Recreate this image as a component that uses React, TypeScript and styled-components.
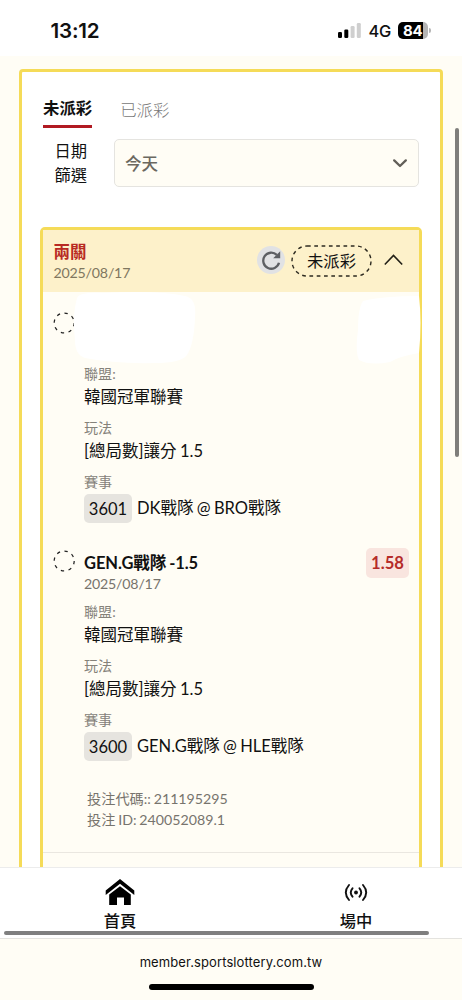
import React from "react";
import styled, { createGlobalStyle } from "styled-components";

const GlobalStyle = createGlobalStyle`
  *, *::before, *::after { box-sizing: border-box; }
  body {
    margin: 0;
    background: #fffdf5;
    color: #111;
    font-family: Lato, "Noto Sans CJK TC", sans-serif;
  }
`;

const Screen = styled.div`
  position: relative;
  display: flex;
  flex-direction: column;
  width: 462px;
  height: 1000px;
  overflow: hidden;
  background: #fffdf5;
`;

const StatusBar = styled.header`
  flex: none;
  display: flex;
  align-items: center;
  justify-content: space-between;
  height: 56px;
  padding: 5px 31px 0 50.5px;
  background: #fff;
  font-family: Inter, sans-serif;
`;

const Clock = styled.span`
  font-size: 20.6px;
  font-weight: 600;
  letter-spacing: -0.2px;
`;

const StatusIcons = styled.div`
  display: flex;
  align-items: center;
`;

const Network = styled.span`
  margin: 0 7px 0 7px;
  font-size: 16.4px;
  font-weight: 500;
  letter-spacing: -0.2px;
`;

const Battery = styled.div`
  display: flex;
  align-items: center;
`;

const BatteryBody = styled.div`
  width: 30px;
  height: 17px;
  padding-left: 5px;
  border-radius: 5px;
  background: linear-gradient(to right, #000 25px, #b5b5b5 25px);
  color: #fff;
  font-size: 15px;
  font-weight: 700;
  line-height: 17px;
  letter-spacing: -0.3px;
`;

const BatteryCap = styled.div`
  width: 2px;
  height: 5px;
  margin-left: 1px;
  border-radius: 0 2px 2px 0;
  background: #b5b5b5;
`;

const Content = styled.main`
  flex: none;
  height: 811px;
  padding: 13px 19px 0;
  overflow: hidden;
`;

const Panel = styled.section`
  height: 830px;
  padding: 20px 20px 0 18px;
  border: 3px solid #f5db58;
  border-radius: 4px;
  background: #fff;
`;

const Tabs = styled.nav`
  display: flex;
  gap: 28px;
  padding-left: 3px;
`;

const Tab = styled.a<{ $active?: boolean }>`
  height: 36px;
  padding-top: ${(p) => (p.$active ? 4 : 6)}px;
  border-bottom: 3px solid ${(p) => (p.$active ? "#b11a22" : "transparent")};
  color: ${(p) => (p.$active ? "#111" : "#777")};
  font-size: 16.4px;
  font-weight: ${(p) => (p.$active ? 700 : 300)};
  line-height: 24px;
`;

const FilterRow = styled.div`
  display: flex;
  justify-content: flex-end;
  align-items: center;
  gap: 27px;
  margin: 11px 1px 0 0;
`;

const FilterLabel = styled.label`
  width: 33px;
  font-size: 16.3px;
  line-height: 24px;
  text-align: right;
`;

const Select = styled.div`
  display: flex;
  align-items: center;
  justify-content: space-between;
  width: 305px;
  height: 48px;
  padding: 0 11px 0 10px;
  border: 1.5px solid #e5e4e0;
  border-radius: 5px;
  background: #fffdf5;
  color: #6b6860;
  font-size: 16.5px;
  font-weight: 500;
`;

const Slip = styled.article`
  position: relative;
  height: 720px;
  margin: 40px -2px 0 0;
  border: 3px solid #f5db58;
  border-radius: 5px;
  background: #fffdf5;
`;

const SlipHeader = styled.div`
  display: flex;
  align-items: center;
  height: 62px;
  padding: 1px 16px 0 10.5px;
  background: #fdf1ca;
`;

const SlipTitle = styled.div`
  flex: 1;
`;

const SlipName = styled.div`
  position: relative;
  top: 1px;
  color: #b82a22;
  font-size: 16.5px;
  font-weight: 700;
  line-height: 21px;
`;

const DateText = styled.div<{ $tone?: string }>`
  color: ${(p) => p.$tone || "#77746d"};
  font-size: 14.2px;
  line-height: 21px;
  letter-spacing: -0.2px;
`;

const Refresh = styled.div`
  display: grid;
  place-items: center;
  width: 28px;
  height: 28px;
  margin: -4px 6px 0 0;
  border-radius: 50%;
  background: #e1e2e4;
`;

const Status = styled.div`
  position: relative;
  width: 81px;
  height: 32px;
  margin: -2px 12px 0 0;
  font-size: 16.3px;
  line-height: 31px;
  text-align: center;
`;

const PillOutline = styled.svg`
  position: absolute;
  inset: 0;
`;

const Chevron = styled.svg`
  margin-top: -4px;
`;

const Leg = styled.section`
  display: grid;
  grid-template-columns: 31.5px 1fr auto;
  height: 238px;
  padding: 0 10px 0 9.5px;
`;

const Marker = styled.svg`
  margin-top: -2px;
`;

const Legs = styled.div`
  padding-top: 21.5px;
`;

const LegTitle = styled.div`
  height: 21px;
  font-size: 16.5px;
  font-weight: 700;
  line-height: 22px;
  letter-spacing: -0.1px;
  word-spacing: -0.8px;
  white-space: nowrap;
`;

const LegDate = styled.div`
  height: 28.5px;
`;

const Field = styled.div`
  height: 54.2px;
`;

const FieldLabel = styled.div`
  color: #85827a;
  font-size: 14.1px;
  line-height: 22px;
`;

const FieldValue = styled.div`
  display: flex;
  align-items: center;
  gap: 5px;
  font-size: 16.5px;
  line-height: 24px;
  word-spacing: -0.9px;
  white-space: nowrap;
`;

const GameNumber = styled.span`
  width: 48px;
  height: 29px;
  margin-top: 1px;
  border-radius: 5px;
  background: #e6e4df;
  line-height: 30px;
  text-align: center;
`;

const Odds = styled.div`
  width: 43px;
  height: 30px;
  margin-top: -4px;
  border-radius: 5px;
  background: #f9e5df;
  color: #b52b29;
  font-size: 16.6px;
  font-weight: 700;
  line-height: 31px;
  text-align: center;
`;

const Codes = styled.div`
  height: 65px;
  margin-top: -2px;
  padding-left: 44px;
  border-bottom: 1.5px solid #eae7e0;
  color: #77746d;
  font-size: 14.2px;
  line-height: 21px;
  word-spacing: -0.8px;
`;

const Masks = styled.svg`
  position: absolute;
  left: 30px;
  top: 60px;
  overflow: visible;
`;

const BottomNav = styled.nav`
  position: relative;
  flex: none;
  display: flex;
  height: 71px;
  padding-left: 2px;
  border-top: 1.5px solid #ececec;
  background: #fff;
`;

const NavItem = styled.a`
  flex: none;
  display: flex;
  flex-direction: column;
  align-items: center;
  width: 236px;
  padding-top: 9px;
  font-size: 16.3px;
  font-weight: 500;
  line-height: 25px;
  svg { height: 31px; }
`;

const HorizontalThumb = styled.div`
  position: absolute;
  left: 4px;
  bottom: 3px;
  width: 425px;
  height: 4px;
  border-radius: 2px;
  background: #7f7f7f;
`;

const VerticalThumb = styled.div`
  position: absolute;
  left: 455px;
  top: 128px;
  width: 4px;
  height: 329px;
  border-radius: 2px;
  background: #7f7e7b;
`;

const AddressBar = styled.footer`
  flex: 1;
  display: flex;
  flex-direction: column;
  align-items: center;
  padding-top: 12px;
  border-top: 1px solid #e4e3df;
  font-family: Inter, sans-serif;
  font-size: 13px;
  line-height: 22px;
  letter-spacing: 0.1px;
`;

const HomeIndicator = styled.div`
  width: 165px;
  height: 6px;
  margin-top: 11px;
  border-radius: 3px;
  background: #000;
`;

const DashedCircle = () => (
  <Marker width="23" height="23" viewBox="0 0 23 23" fill="none">
    <circle cx="11.2" cy="11" r="10" stroke="#222" strokeWidth="1.25" strokeDasharray="3.3 4.55" />
  </Marker>
);

type LegData = { title?: string; date?: string; odds?: string; no: string; game: string };

const legs: LegData[] = [
  { no: "3601", game: "DK戰隊 @ BRO戰隊" },
  { title: "GEN.G戰隊 -1.5", date: "2025/08/17", odds: "1.58", no: "3600", game: "GEN.G戰隊 @ HLE戰隊" },
];

const BetLeg = ({ leg }: { leg: LegData }) => (
  <Leg>
    <DashedCircle />
    <div>
      <LegTitle>{leg.title}</LegTitle>
      <LegDate><DateText>{leg.date}</DateText></LegDate>
      <Field>
        <FieldLabel>聯盟:</FieldLabel>
        <FieldValue>韓國冠軍聯賽</FieldValue>
      </Field>
      <Field>
        <FieldLabel>玩法</FieldLabel>
        <FieldValue>[總局數]讓分 1.5</FieldValue>
      </Field>
      <Field>
        <FieldLabel>賽事</FieldLabel>
        <FieldValue><GameNumber>{leg.no}</GameNumber><span>{leg.game}</span></FieldValue>
      </Field>
    </div>
    {leg.odds && <Odds>{leg.odds}</Odds>}
  </Leg>
);

export default function App() {
  return (
    <>
      <GlobalStyle />
      <Screen>
        <StatusBar>
          <Clock>13:12</Clock>
          <StatusIcons>
            <svg width="23" height="15" viewBox="0 0 23 15">
              <rect x="0" y="9" width="4" height="6" rx="1.2" />
              <rect x="6.3" y="6.5" width="4" height="8.5" rx="1.2" />
              <rect x="12.6" y="3" width="4" height="12" rx="1.2" fill="#cfcfcf" />
              <rect x="18.8" y="0" width="4" height="15" rx="1.2" fill="#cfcfcf" />
            </svg>
            <Network>4G</Network>
            <Battery><BatteryBody>84</BatteryBody><BatteryCap /></Battery>
          </StatusIcons>
        </StatusBar>

        <Content>
          <Panel>
            <Tabs>
              <Tab $active>未派彩</Tab>
              <Tab>已派彩</Tab>
            </Tabs>
            <FilterRow>
              <FilterLabel>日期篩選</FilterLabel>
              <Select>
                今天
                <svg width="14" height="9" viewBox="0 0 14 9" fill="none">
                  <path d="M1.2 1.4 7 7 12.8 1.4" stroke="#625f58" strokeWidth="2.3" strokeLinecap="round" strokeLinejoin="round" />
                </svg>
              </Select>
            </FilterRow>

            <Slip>
              <SlipHeader>
                <SlipTitle>
                  <SlipName>兩關</SlipName>
                  <DateText $tone="#80775f">2025/08/17</DateText>
                </SlipTitle>
                <Refresh>
                  <svg width="20" height="20" viewBox="0 0 20 20" fill="none">
                    <path d="M15.8 4.9A8 8 0 1 0 18 12.8" stroke="#5d5f63" strokeWidth="2.3" />
                    <path d="M19.2 1.2V8.2H12.2Z" fill="#5d5f63" />
                  </svg>
                </Refresh>
                <Status>
                  未派彩
                  <PillOutline width="81" height="32" viewBox="0 0 81 32" fill="none">
                    <rect x="1" y="1" width="79" height="30" rx="15" stroke="#2d2a20" strokeWidth="1.4" strokeDasharray="3.7 3.6" />
                  </PillOutline>
                </Status>
                <Chevron width="19" height="12" viewBox="0 0 19 12" fill="none">
                  <path d="M.8 10.5 9.5 1.5 18.2 10.5" stroke="#222017" strokeWidth="1.6" />
                </Chevron>
              </SlipHeader>
              <Legs>
                {legs.map((leg) => <BetLeg key={leg.no} leg={leg} />)}
              </Legs>
              <Codes>
                <div>投注代碼:: 211195295</div>
                <div>投注 ID: 240052089.1</div>
              </Codes>
              <Masks width="350" height="78" viewBox="0 0 350 78" fill="#fff">
                <path d="M4 8Q6 2 30 3Q85 0 112 6Q124 8 122 28Q121 54 114 65Q108 73 82 73Q42 74 12 68Q2 65 2 50Q-1 25 4 8Z" />
                <path d="M290 11Q310 6 346 6Q349 32 346 63Q327 66 317 72Q297 76 286 70Q282 62 285 40Q285 18 290 11Z" />
              </Masks>
            </Slip>
          </Panel>
        </Content>

        <BottomNav>
          <NavItem>
            <svg width="30" height="31" viewBox="0 0 30 31">
              <path d="M15 2 29.3 13.4V18L15 6.8.7 18V13.4Z" />
              <path d="M15 9.2 25.8 17.6V28H19V20.5H12V28H4.2V17.6Z" />
            </svg>
            首頁
          </NavItem>
          <NavItem>
            <svg width="24" height="31" viewBox="0 0 24 31" fill="none" stroke="#111" strokeWidth="1.9" strokeLinecap="round">
              <circle cx="12" cy="15.5" r="1.9" fill="#111" stroke="none" />
              <path d="M8.5 11.3Q5 15.5 8.5 19.7M15.5 11.3Q19 15.5 15.5 19.7M5 8Q-1.4 15.5 5 23M19 8Q25.4 15.5 19 23" />
            </svg>
            場中
          </NavItem>
          <HorizontalThumb />
        </BottomNav>
        <AddressBar>
          member.sportslottery.com.tw
          <HomeIndicator />
        </AddressBar>
        <VerticalThumb />
      </Screen>
    </>
  );
}
